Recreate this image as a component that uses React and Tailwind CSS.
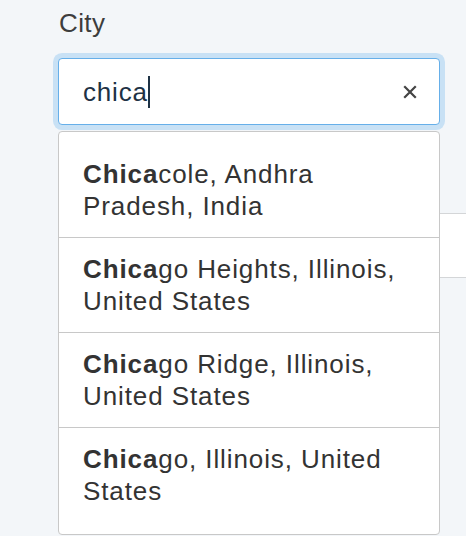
export default function App() {
  const cities = [
    { match: "Chica", rest: "cole, Andhra Pradesh, India" },
    { match: "Chica", rest: "go Heights, Illinois, United States" },
    { match: "Chica", rest: "go Ridge, Illinois, United States" },
    { match: "Chica", rest: "go, Illinois, United States" },
  ];

  return (
    <div className="min-h-screen bg-[#f3f6f9] font-['Liberation_Sans',Arial,sans-serif] overflow-hidden">
      <div className="pl-[58px] pt-[7px] w-[440px]">
        <div className="ml-[1px] text-[26px] leading-[32px] text-[#3d3d3d] tracking-[0.4px]">
          City
        </div>

        <div className="relative mt-[19px]">
          <div className="h-[67px] bg-white border border-[#66afe9] rounded-[4px] shadow-[0_0_0_5px_#c8e1f5] flex items-center pl-6 pr-[22px]">
            <span className="text-[26px] leading-[32px] text-[#1e3245] tracking-[0.8px]">chica</span>
            <span className="w-[2px] h-[32px] bg-[#1e3245]" />
            <svg
              className="ml-auto"
              width="14"
              height="14"
              viewBox="0 0 14 14"
              fill="none"
              stroke="#444"
              strokeWidth="2.2"
              strokeLinecap="square"
            >
              <path d="M2 2l10 10M12 2L2 12" />
            </svg>
          </div>

          <ul className="absolute top-[73px] left-0 w-full bg-white border border-[#c8c8c8] rounded-[4px] pt-[11px] pb-[12px] z-10">
            {cities.map((c, i) => (
              <li
                key={i}
                className={`px-6 py-[15px] text-[26px] leading-[32px] text-[#333] tracking-[0.9px] ${
                  i > 0 ? "border-t border-[#c8c8c8]" : ""
                }`}
              >
                <span className="font-bold">{c.match}</span>
                {c.rest}
              </li>
            ))}
          </ul>
        </div>
      </div>

      <div className="mt-[88px] ml-[200px] h-[65px] bg-white border-y border-[#d4d6d8]" />
    </div>
  );
}
